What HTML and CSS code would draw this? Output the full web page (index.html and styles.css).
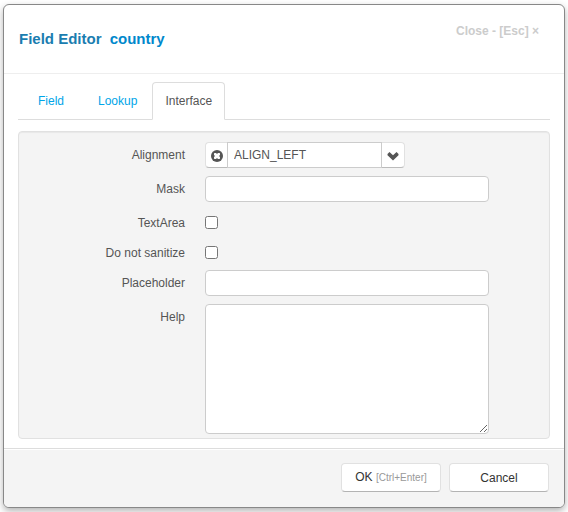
FILE: index.html
```html
<!DOCTYPE html>
<html lang="en">
<head>
<meta charset="utf-8">
<title>Field Editor</title>
<link rel="stylesheet" href="styles.css">
</head>
<body>
<form class="dialog" role="dialog" aria-labelledby="dialog-title">
  <header class="dialog-header">
    <h1 class="title" id="dialog-title">Field Editor <a class="title-link" href="#country">country</a></h1>
    <button class="close" type="button">Close - [Esc] ×</button>
  </header>
  <main class="dialog-body">
    <nav class="tabs">
      <a class="tab" href="#field">Field</a>
      <a class="tab" href="#lookup">Lookup</a>
      <a class="tab tab-active" href="#interface">Interface</a>
    </nav>
    <section class="well">
      <div class="row">
        <label class="label" for="alignment">Alignment</label>
        <div class="combo">
          <button class="combo-button combo-clear" type="button" aria-label="Clear">
            <svg class="icon" width="14" height="14" viewBox="0 0 14 14"><circle cx="7" cy="7" r="6" fill="#555"/><path d="M4.5 4H6L7 5 8 4H9.500L10 4.500V6L9 7 10 8V9.500L9.500 10H8L7 9 6 10H4.500L4 9.500V8L5 7 4 6V4.500Z" fill="#fff"/></svg>
          </button>
          <input class="combo-input" id="alignment" type="text" value="ALIGN_LEFT">
          <button class="combo-button combo-open" type="button" aria-label="Show options">
            <svg class="icon" width="14" height="14" viewBox="0 0 14 14"><path d="M3.500 3 7 6.300 10.500 3 12.500 5V6.200L7 11.500 1.500 6.200V5Z" fill="#555"/></svg>
          </button>
        </div>
      </div>
      <div class="row">
        <label class="label" for="mask">Mask</label>
        <input class="input" id="mask" type="text">
      </div>
      <div class="row">
        <label class="label" for="textarea">TextArea</label>
        <input class="check" id="textarea" type="checkbox">
      </div>
      <div class="row">
        <label class="label" for="sanitize">Do not sanitize</label>
        <input class="check" id="sanitize" type="checkbox">
      </div>
      <div class="row">
        <label class="label" for="placeholder">Placeholder</label>
        <input class="input" id="placeholder" type="text">
      </div>
      <div class="row">
        <label class="label" for="help">Help</label>
        <textarea class="input input-tall" id="help"></textarea>
      </div>
    </section>
  </main>
  <footer class="dialog-footer">
    <button class="button" type="submit">OK <small class="hint">[Ctrl+Enter]</small></button>
    <button class="button" type="button">Cancel</button>
  </footer>
</form>
</body>
</html>
```
FILE: styles.css
```css
* {
  box-sizing: border-box;
}

body {
  margin: 0;
  padding: 4px 3px;
  background: #fff;
  color: #555;
  font: 12px/18px "Liberation Sans", Arial, sans-serif;
}

button,
input,
textarea {
  margin: 0;
  color: inherit;
  font: inherit;
}

a {
  text-decoration: none;
}

.dialog {
  overflow: hidden;
  border: 1px solid #888;
  border-radius: 6px;
  background: #fff;
  box-shadow: 0 3px 7px rgba(0, 0, 0, 0.3);
}

.dialog-header {
  display: flex;
  justify-content: space-between;
  align-items: flex-start;
  padding: 15px 24px 15px 15px;
  border-bottom: 1px solid #eee;
}

.title {
  margin: 0;
  color: #1a7db0;
  font-size: 15px;
  line-height: 38px;
}

.title-link {
  margin-left: 4px;
  color: #0088cc;
}

.close {
  padding: 2px 1px;
  border: 0;
  background: none;
  color: #ccc;
  font-weight: bold;
}

.dialog-body {
  padding: 8px 14px 9px;
}

.tabs {
  display: flex;
  padding-left: 7px;
  border-bottom: 1px solid #ddd;
}

.tab {
  margin-bottom: -1px;
  padding: 9px 12px;
  border: 1px solid transparent;
  border-radius: 4px 4px 0 0;
  color: #00a5e8;
}

.tab + .tab {
  margin-left: 8px;
}

.tab + .tab-active {
  margin-left: 2px;
  border-color: #ddd;
  border-bottom-color: #fff;
  background: #fff;
  color: #555;
}

.well {
  display: grid;
  gap: 8px;
  margin-top: 11px;
  padding: 10px 60px 4px 0;
  border: 1px solid #e1e1e1;
  border-radius: 4px;
  background: #f4f4f4;
  box-shadow: inset 0 1px 1px rgba(0, 0, 0, 0.05);
}

.row {
  display: grid;
  grid-template-columns: 166px 1fr;
  column-gap: 20px;
  align-items: start;
}

.label {
  padding-top: 4px;
  text-align: right;
}

.input {
  display: block;
  width: 100%;
  height: 26px;
  padding: 3px 6px;
  border: 1px solid #ccc;
  border-radius: 4px;
  background: #fff;
}

.input-tall {
  height: 130px;
  resize: both;
}

.check {
  width: 13px;
  height: 13px;
  margin-top: 6px;
}

.combo {
  display: flex;
  width: 200px;
}

.combo-input {
  flex: 1;
  min-width: 0;
  height: 26px;
  padding: 3px 6px;
  border: 1px solid #ccc;
  background: #fff;
}

.combo-button {
  display: flex;
  align-items: center;
  justify-content: center;
  width: 23px;
  height: 26px;
  padding: 2px 0 0;
  border: 1px solid #e1e1e1;
  border-bottom-color: #bbb;
  background: #fff;
}

.combo-clear {
  width: 22px;
  border-right: 0;
  border-radius: 4px 0 0 4px;
}

.combo-open {
  border-left: 0;
  border-radius: 0 4px 4px 0;
}

.dialog-footer {
  display: flex;
  justify-content: flex-end;
  gap: 8px;
  padding: 14px 15px 15px;
  border-top: 1px solid #ddd;
  background: #f4f4f4;
  box-shadow: inset 0 1px 0 #fff;
}

.button {
  width: 100px;
  height: 29px;
  padding: 0;
  border: 1px solid #e1e1e1;
  border-bottom-color: #b3b3b3;
  border-radius: 4px;
  background: #fff;
  color: #333;
}

.hint {
  color: #999;
  font-size: 10px;
}
```
